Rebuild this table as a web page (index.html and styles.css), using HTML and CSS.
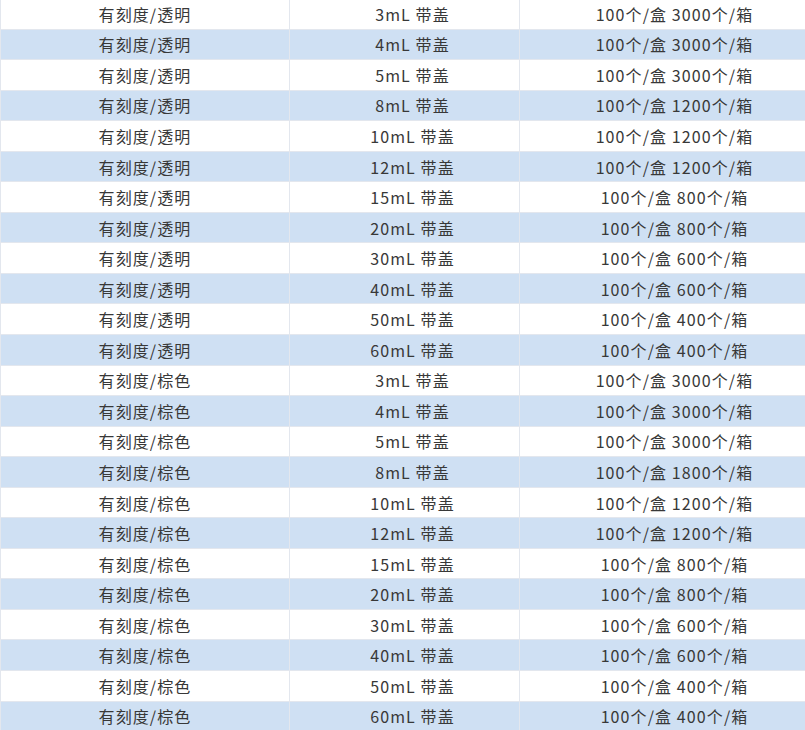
FILE: index.html
```html
<!DOCTYPE html>
<html lang="zh">
<head>
<meta charset="utf-8">
<link rel="stylesheet" href="styles.css">
</head>
<body>
<div class="wrap">
<table class="spec">
<colgroup><col class="c1"><col class="c2"><col class="c3"></colgroup>
<tbody>
<tr><td>有刻度/透明</td><td class="m">3mL 带盖</td><td>100个/盒 3000个/箱</td></tr>
<tr><td>有刻度/透明</td><td class="m">4mL 带盖</td><td>100个/盒 3000个/箱</td></tr>
<tr><td>有刻度/透明</td><td class="m">5mL 带盖</td><td>100个/盒 3000个/箱</td></tr>
<tr><td>有刻度/透明</td><td class="m">8mL 带盖</td><td>100个/盒 1200个/箱</td></tr>
<tr><td>有刻度/透明</td><td class="m">10mL 带盖</td><td>100个/盒 1200个/箱</td></tr>
<tr><td>有刻度/透明</td><td class="m">12mL 带盖</td><td>100个/盒 1200个/箱</td></tr>
<tr><td>有刻度/透明</td><td class="m">15mL 带盖</td><td>100个/盒 800个/箱</td></tr>
<tr><td>有刻度/透明</td><td class="m">20mL 带盖</td><td>100个/盒 800个/箱</td></tr>
<tr><td>有刻度/透明</td><td class="m">30mL 带盖</td><td>100个/盒 600个/箱</td></tr>
<tr><td>有刻度/透明</td><td class="m">40mL 带盖</td><td>100个/盒 600个/箱</td></tr>
<tr><td>有刻度/透明</td><td class="m">50mL 带盖</td><td>100个/盒 400个/箱</td></tr>
<tr><td>有刻度/透明</td><td class="m">60mL 带盖</td><td>100个/盒 400个/箱</td></tr>
<tr><td>有刻度/棕色</td><td class="m">3mL 带盖</td><td>100个/盒 3000个/箱</td></tr>
<tr><td>有刻度/棕色</td><td class="m">4mL 带盖</td><td>100个/盒 3000个/箱</td></tr>
<tr><td>有刻度/棕色</td><td class="m">5mL 带盖</td><td>100个/盒 3000个/箱</td></tr>
<tr><td>有刻度/棕色</td><td class="m">8mL 带盖</td><td>100个/盒 1800个/箱</td></tr>
<tr><td>有刻度/棕色</td><td class="m">10mL 带盖</td><td>100个/盒 1200个/箱</td></tr>
<tr><td>有刻度/棕色</td><td class="m">12mL 带盖</td><td>100个/盒 1200个/箱</td></tr>
<tr><td>有刻度/棕色</td><td class="m">15mL 带盖</td><td>100个/盒 800个/箱</td></tr>
<tr><td>有刻度/棕色</td><td class="m">20mL 带盖</td><td>100个/盒 800个/箱</td></tr>
<tr><td>有刻度/棕色</td><td class="m">30mL 带盖</td><td>100个/盒 600个/箱</td></tr>
<tr><td>有刻度/棕色</td><td class="m">40mL 带盖</td><td>100个/盒 600个/箱</td></tr>
<tr><td>有刻度/棕色</td><td class="m">50mL 带盖</td><td>100个/盒 400个/箱</td></tr>
<tr><td>有刻度/棕色</td><td class="m">60mL 带盖</td><td>100个/盒 400个/箱</td></tr>
</tbody>
</table>
</div>
</body>
</html>
```
FILE: styles.css
```css
html, body {
  margin: 0;
  padding: 0;
  background: #ffffff;
  overflow: hidden;
}
.wrap {
  width: 805px;
  height: 730px;
  overflow: hidden;
}
.spec {
  border-collapse: collapse;
  table-layout: fixed;
  width: 829px;
  margin-top: -2px;
  font-family: "Noto Sans CJK SC", "Noto Sans", sans-serif;
  font-size: 16px;
  letter-spacing: 1.1px;
  color: #383838;
}
.c1 { width: 289px; }
.c2 { width: 230px; }
.c3 { width: 310px; }
.spec td {
  height: 30.56px;
  padding: 0;
  box-sizing: border-box;
  text-align: center;
  vertical-align: middle;
  line-height: 20px;
  border: 1px solid #e3e7ee;
  white-space: nowrap;
}
.spec td.m {
  padding-left: 16px;
}
.spec tr:nth-child(even) td {
  background: #cfe0f3;
}
```
